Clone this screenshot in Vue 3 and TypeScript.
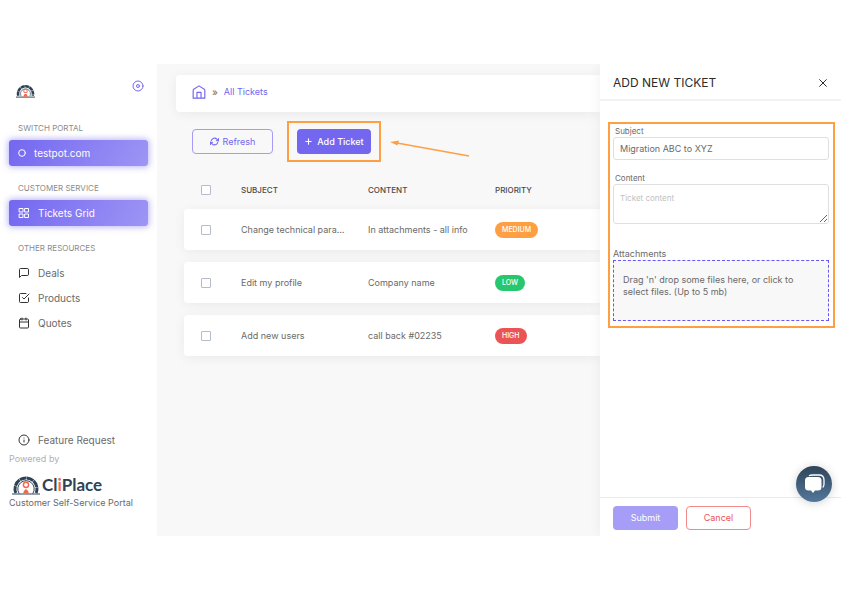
<script setup lang="ts">
import { ref } from 'vue'

interface Ticket {
  id: number
  subject: string
  content: string
  priority: 'medium' | 'low' | 'high'
}

const tickets: Ticket[] = [
  { id: 1, subject: 'Change technical parameters', content: 'In attachments - all info', priority: 'medium' },
  { id: 2, subject: 'Edit my profile', content: 'Company name', priority: 'low' },
  { id: 3, subject: 'Add new users', content: 'call back #02235', priority: 'high' },
]

const subject = ref('Migration ABC to XYZ')
const content = ref('')
const selected = ref<number[]>([])

function toggleAll(event: Event) {
  selected.value = (event.target as HTMLInputElement).checked ? tickets.map((t) => t.id) : []
}
</script>

<template>
  <div class="page">
    <div class="shell">
      <aside class="sidebar">
        <div class="brand">
          <svg class="brand-mark" viewBox="0 0 28 20" aria-hidden="true">
            <path d="M0 19h28" class="ink" stroke-width="1.4" />
            <path d="M3.400 17A11 11 0 1 1 24.600 17" class="ink" stroke-width="3.800" stroke-dasharray="6 .5" />
            <path d="M7.500 17.500A7.300 7.300 0 1 1 20.500 17.500" class="ink" stroke-width="1" />
            <circle cx="14" cy="10" r="2.600" class="accent-line" />
            <path d="M10.500 18.500l2-4h3l2 4z" class="accent" />
          </svg>
          <button class="pin" aria-label="Collapse menu">
            <svg viewBox="0 0 24 24" class="icon"><circle cx="12" cy="12" r="10" /><circle cx="12" cy="12" r="3" /></svg>
          </button>
        </div>

        <h2 class="group">SWITCH PORTAL</h2>
        <a href="#" class="pill portal">
          <svg viewBox="0 0 24 24" class="icon dot"><circle cx="12" cy="12" r="10" /></svg>
          <span>testpot.com</span>
        </a>

        <h2 class="group">CUSTOMER SERVICE</h2>
        <a href="#" class="pill">
          <svg viewBox="0 0 24 24" class="icon"><path d="M3 3h7v7H3zM14 3h7v7h-7zM14 14h7v7h-7zM3 14h7v7H3z" /></svg>
          <span>Tickets Grid</span>
        </a>

        <h2 class="group">OTHER RESOURCES</h2>
        <nav class="links">
          <a href="#" class="link">
            <svg viewBox="0 0 24 24" class="icon"><path d="M21 15a2 2 0 0 1-2 2H7l-4 4V5a2 2 0 0 1 2-2h14a2 2 0 0 1 2 2z" /></svg>
            <span>Deals</span>
          </a>
          <a href="#" class="link">
            <svg viewBox="0 0 24 24" class="icon"><path d="M9 11l3 3L22 4" /><path d="M21 12v7a2 2 0 0 1-2 2H5a2 2 0 0 1-2-2V5a2 2 0 0 1 2-2h11" /></svg>
            <span>Products</span>
          </a>
          <a href="#" class="link">
            <svg viewBox="0 0 24 24" class="icon"><rect x="3" y="4" width="18" height="18" rx="2" /><path d="M16 2v4M8 2v4M3 10h18" /></svg>
            <span>Quotes</span>
          </a>
        </nav>

        <div class="side-foot">
          <a href="#" class="link">
            <svg viewBox="0 0 24 24" class="icon"><circle cx="12" cy="12" r="10" /><path d="M12 16v-4M12 8h.01" /></svg>
            <span>Feature Request</span>
          </a>
          <p class="powered">Powered by</p>
          <div class="vendor">
            <svg class="vendor-mark" viewBox="0 0 28 20" aria-hidden="true">
              <path d="M0 19h28" class="ink" stroke-width="1" />
              <path d="M3.800 18A11 11 0 1 1 24.200 18" class="ink" stroke-width="3" stroke-dasharray="7 .4" />
              <path d="M7.200 18.500A8.200 8.200 0 1 1 20.800 18.500" class="ink" stroke-width="1" />
              <circle cx="14" cy="9.800" r="2.600" class="accent-line" />
              <path d="M11 18.500q.5-3.500 3-4.500 2.500 1 3 4.500z" class="accent" />
            </svg>
            <span class="vendor-name">Cl<span class="hot">i</span>Place</span>
          </div>
          <p class="tagline">Customer Self-Service Portal</p>
        </div>
      </aside>

      <main class="main">
        <nav class="crumbs" aria-label="Breadcrumb">
          <a href="#" class="home" aria-label="Home">
            <svg viewBox="0 0 24 24" class="icon"><path d="M2 9.500q0-1.500 1-2.200L12 1.500l9 5.800q1 .7 1 2.200V22.500H2z" /><path d="M8.500 22V12.500h7V22" /></svg>
          </a>
          <span class="sep">»</span>
          <a href="#" class="crumb">All Tickets</a>
        </nav>

        <div class="toolbar">
          <button class="btn outline">
            <svg viewBox="0 0 24 24" class="icon small"><path d="M23 4v6h-6M1 20v-6h6" /><path d="M3.500 9a9 9 0 0 1 14.900-3.400L23 10M1 14l4.600 4.400A9 9 0 0 0 20.500 15" /></svg>
            Refresh
          </button>
          <div class="callout">
            <button class="btn solid">
              <svg viewBox="0 0 24 24" class="icon small"><path d="M12 5v14M5 12h14" /></svg>
              Add Ticket
            </button>
          </div>
          <svg class="arrow" viewBox="0 0 80 18" aria-hidden="true">
            <path d="M7 3L79 16" fill="none" stroke="#ff9f43" stroke-width="1.500" />
            <path d="M0 2l9-1.500-1.500 5z" fill="#ff9f43" />
          </svg>
        </div>

        <table class="tickets">
          <colgroup>
            <col class="c-check" /><col class="c-text" /><col class="c-text" /><col />
          </colgroup>
          <thead>
            <tr>
              <th><input type="checkbox" aria-label="Select all tickets" @change="toggleAll" /></th>
              <th>SUBJECT</th>
              <th>CONTENT</th>
              <th>PRIORITY</th>
            </tr>
          </thead>
          <tbody>
            <tr v-for="t in tickets" :key="t.id">
              <td><input v-model="selected" type="checkbox" :value="t.id" :aria-label="t.subject" /></td>
              <td class="clip">{{ t.subject }}</td>
              <td>{{ t.content }}</td>
              <td><span class="badge" :class="t.priority">{{ t.priority.toUpperCase() }}</span></td>
            </tr>
          </tbody>
        </table>
      </main>

      <section class="drawer" aria-labelledby="drawer-title">
        <header class="drawer-head">
          <h1 id="drawer-title">ADD NEW TICKET</h1>
          <button class="close" aria-label="Close">
            <svg viewBox="0 0 24 24" class="icon"><path d="M4 4l16 16M20 4L4 20" /></svg>
          </button>
        </header>
        <form id="ticket-form" class="form" @submit.prevent>
          <label for="subject">Subject</label>
          <input id="subject" v-model="subject" class="field" type="text" />
          <label for="content">Content</label>
          <textarea id="content" v-model="content" class="field area" placeholder="Ticket content"></textarea>
          <label for="files" class="files-label">Attachments</label>
          <label for="files" class="drop">Drag 'n' drop some files here, or click to select files. (Up to 5 mb)</label>
          <input id="files" type="file" multiple hidden />
        </form>
        <footer class="drawer-foot">
          <button class="btn submit" type="submit" form="ticket-form">Submit</button>
          <button class="btn cancel">Cancel</button>
        </footer>
        <button class="chat" aria-label="Open chat">
          <svg viewBox="0 0 36 36">
            <path d="M13 9.700Q14 9 17 9h6q5 0 5 5v4q0 2.500-1.300 3.500" fill="none" stroke="#fff" stroke-width="1.300" />
            <path d="M12.500 11h9.500q3.500 0 3.500 3.500v6.500q0 3.500-3.500 3.500h-3l-2 2.500-2-2.500h-2.500q-3.500 0-3.500-3.500v-6.500q0-3.500 3.500-3.500z" fill="#fff" />
          </svg>
        </button>
      </section>
    </div>
  </div>
</template>

<style>
body {
  margin: 0;
  background: #fff;
}
</style>

<style scoped>
* {
  box-sizing: border-box;
}
.page {
  display: flex;
  min-height: 100vh;
  padding: 64px 0;
  font-family: Inter, "Open Sans", sans-serif;
  font-size: 9px;
  line-height: 12px;
  color: #6a6a6a;
}
.shell {
  flex: 1;
  display: grid;
  grid-template-columns: 157px minmax(0, 1fr) 241px;
}
h1, h2, p {
  margin: 0;
  font-weight: 400;
}
a {
  color: inherit;
  text-decoration: none;
}
button {
  font: inherit;
  padding: 0;
  border: 0;
  background: none;
  cursor: pointer;
}
.icon {
  display: block;
  flex: none;
  width: 12px;
  height: 12px;
  fill: none;
  stroke: currentColor;
  stroke-width: 2;
  stroke-linecap: round;
  stroke-linejoin: round;
}
.icon.small {
  width: 9px;
  height: 9px;
  stroke-width: 3;
}

/* Sidebar */
.sidebar {
  display: flex;
  flex-direction: column;
  padding: 16px 9px 27px;
  background: #fff;
}
.brand {
  display: flex;
  justify-content: space-between;
  padding: 0 4px 0 7px;
  height: 42px;
}
.brand-mark {
  width: 19px;
  height: 14px;
  margin-top: 4px;
}
.ink {
  fill: none;
  stroke: #2f4355;
}
.accent {
  fill: #f4694c;
}
.accent-line {
  fill: none;
  stroke: #f4694c;
  stroke-width: 1.500;
}
.pin {
  align-self: flex-start;
  color: #7367f0;
}
.group {
  padding: 0 9px;
  margin-bottom: 6px;
  font-size: 8px;
  color: #8c8c8c;
}
.pill,
.link {
  display: flex;
  align-items: center;
  gap: 8px;
  padding: 0 9px;
  font-size: 10px;
}
.pill {
  height: 26px;
  margin-bottom: 16px;
  border-radius: 3px;
  color: #fff;
  background: linear-gradient(118deg, #7367f0, #9e95f5);
  box-shadow: 0 0 6px 1px rgba(115, 103, 240, 0.5);
}
.portal .dot {
  width: 8px;
  height: 8px;
  stroke-width: 3;
}
.links {
  display: flex;
  flex-direction: column;
}
.link {
  height: 25px;
}
.link .icon {
  color: #333;
}
.side-foot {
  margin-top: auto;
}
.powered {
  margin-top: 1px;
  color: #b0b0b0;
}
.vendor {
  display: flex;
  align-items: center;
  gap: 2px;
  height: 32px;
  padding: 8px 3px 0;
}
.vendor-mark {
  width: 28px;
  height: 20px;
}
.vendor-name {
  font-family: Lato, sans-serif;
  font-size: 17px;
  font-weight: 700;
  line-height: 20px;
  color: #2f4355;
}
.hot {
  color: #f4694c;
}

/* Ticket list */
.main {
  overflow: hidden;
  padding: 11px 0 0 19px;
  background: #f8f8f8;
}
.crumbs {
  display: flex;
  align-items: center;
  gap: 6px;
  height: 37px;
  padding: 0 16px 3px;
  border-radius: 4px 0 0 4px;
  background: #fff;
  box-shadow: 0 2px 12px rgba(0, 0, 0, 0.06);
}
.home {
  color: #7367f0;
}
.home .icon {
  width: 14px;
  height: 14px;
}
.sep {
  font-size: 10px;
}
.crumb {
  color: #7367f0;
}
.toolbar {
  display: flex;
  align-items: center;
  padding: 9px 0 0 16px;
}
.btn {
  display: inline-flex;
  align-items: center;
  justify-content: center;
  gap: 4px;
  height: 25px;
  border: 1px solid transparent;
  border-radius: 4px;
}
.outline {
  width: 81px;
  margin-right: 14px;
  border-color: #a49cf5;
  color: #7367f0;
}
.callout {
  padding: 6px 8px;
  border: 2px solid #ff9f43;
}
.solid {
  width: 74px;
  color: #fff;
  background: #7367f0;
  font-weight: 500;
}
.arrow {
  width: 80px;
  height: 18px;
  margin: 14px 0 0 9px;
}
.tickets {
  width: calc(100% - 8px);
  margin: 8px 0 0 8px;
  table-layout: fixed;
  border-collapse: separate;
  border-spacing: 0 12px;
}
.c-check {
  width: 57px;
}
.c-text {
  width: 127px;
}
th {
  height: 15px;
  padding: 0;
  text-align: left;
  font-size: 8px;
  font-weight: 500;
  color: #4a4a4a;
}
tbody tr {
  border-radius: 4px 0 0 4px;
  box-shadow: 0 2px 12px rgba(0, 0, 0, 0.06);
}
td {
  height: 41px;
  padding: 0;
  background: #fff;
}
td:first-child {
  border-radius: 4px 0 0 4px;
}
th:first-child,
td:first-child {
  padding-left: 17px;
}
.clip {
  padding-right: 22px;
  overflow: hidden;
  white-space: nowrap;
  text-overflow: ellipsis;
}
input[type="checkbox"] {
  display: block;
  appearance: none;
  width: 10px;
  height: 10px;
  margin: 0;
  border: 1px solid #b4bcc9;
  border-radius: 1px;
  background: #fff;
}
input[type="checkbox"]:checked {
  background: #7367f0;
}
.badge {
  display: inline-block;
  padding: 2px 7px;
  border-radius: 8px;
  font-size: 7px;
  font-weight: 500;
  color: #fff;
}
.medium {
  background: #ff9f43;
}
.low {
  background: #28c76f;
}
.high {
  background: #ea5455;
}

/* Drawer */
.drawer {
  position: relative;
  display: flex;
  flex-direction: column;
  background: #fff;
  box-shadow: 0 0 12px rgba(0, 0, 0, 0.06);
  clip-path: inset(0 0 0 -14px);
}
.drawer-head {
  display: flex;
  align-items: center;
  justify-content: space-between;
  height: 37px;
  padding: 2px 13px 0;
  border-bottom: 2px solid #f2f2f2;
}
h1 {
  font-size: 12px;
  color: #2c2c2c;
}
.close .icon {
  width: 10px;
  height: 10px;
}
.form {
  display: flex;
  flex-direction: column;
  margin: 21px 6px 0 8px;
  padding: 1px 4px 5px 3px;
  border: 2px solid #ff9f43;
}
.form label {
  padding-left: 2px;
  font-size: 8px;
}
.field {
  height: 23px;
  margin: 0 0 12px;
  padding: 0 6px;
  border: 1px solid #dfdfdf;
  border-radius: 3px;
  background: #fff;
  font: inherit;
  color: #6a6a6a;
}
.area {
  height: 40px;
  margin-bottom: 24px;
  padding-top: 7px;
  font-size: 8px;
  resize: vertical;
}
.area::placeholder {
  color: #bfbfbf;
}
.form .files-label {
  padding-left: 0;
  font-size: 9px;
}
.form .drop {
  min-height: 61px;
  padding: 13px 9px;
  border: 1px dashed #6658f5;
  background: #f8f8f8;
  font-size: 9px;
}
.drawer-foot {
  display: flex;
  gap: 8px;
  margin-top: auto;
  padding: 8px 13px 6px;
  border-top: 1px solid #ebebeb;
}
.submit,
.cancel {
  width: 65px;
  height: 24px;
}
.submit {
  color: #fff;
  background: #a59df6;
}
.cancel {
  border-color: #f08a8b;
  color: #ea5455;
}
.chat {
  position: absolute;
  right: 9px;
  bottom: 34px;
  width: 36px;
  height: 36px;
  border-radius: 50%;
  background: linear-gradient(#2f4459, #54779b);
  box-shadow: 0 1px 10px rgba(0, 0, 0, 0.18);
}
.chat svg {
  display: block;
}
</style>
